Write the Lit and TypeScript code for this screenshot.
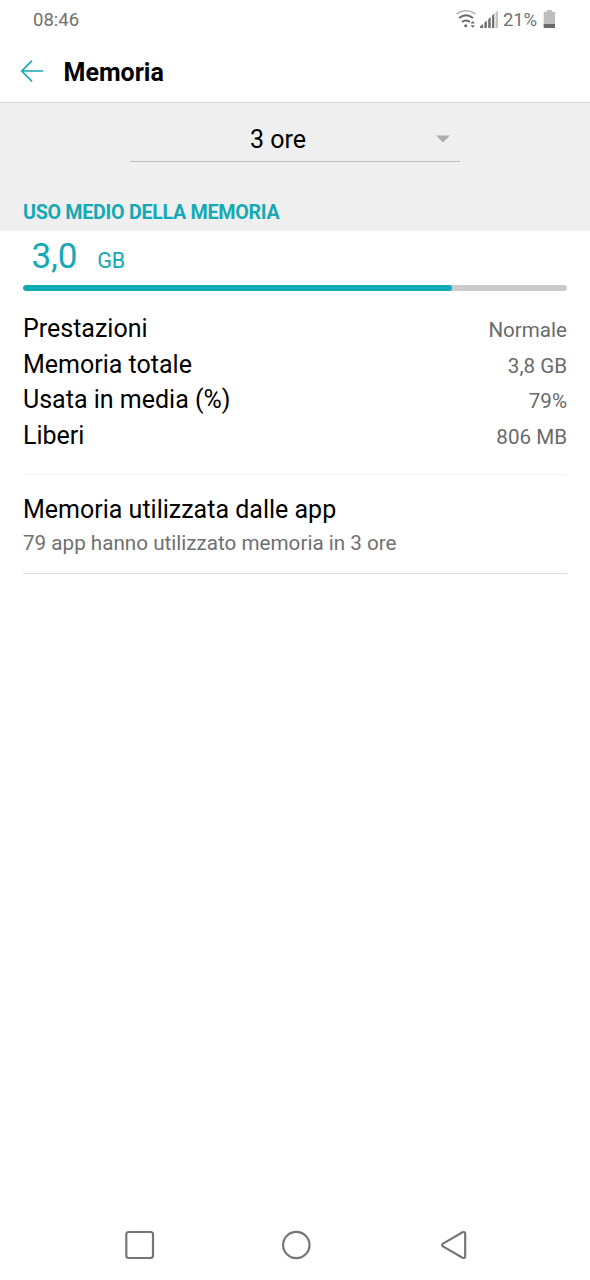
import { LitElement, html, css } from "lit";
import { customElement, property } from "lit/decorators.js";

interface Stat {
  label: string;
  value: string;
}

const STATS: Stat[] = [
  { label: "Prestazioni", value: "Normale" },
  { label: "Memoria totale", value: "3,8 GB" },
  { label: "Usata in media (%)", value: "79%" },
  { label: "Liberi", value: "806 MB" },
];

@customElement("status-bar")
class StatusBar extends LitElement {
  static styles = css`
    :host {
      display: flex;
      justify-content: space-between;
      height: 40px;
      padding: 0 34px 0 33px;
      box-sizing: border-box;
      color: #707070;
      font-size: 18.5px;
      line-height: 40px;
    }
    .right {
      display: flex;
    }
    .battery-level {
      width: 40px;
      padding-left: 4px;
      font-size: 18.5px;
      letter-spacing: -0.1px;
    }
    svg {
      display: block;
    }
  `;

  render() {
    return html`
      <span>08:46</span>
      <div class="right">
        <svg width="44" height="40" viewBox="455 0 44 40" fill="none">
          <path d="M456.5 14Q466 7.500 475.500 14" stroke="#b8b8b8" stroke-width="1.700" />
          <path d="M459 18Q466 12.500 473 18M462 22Q466 18.800 470 22" stroke="#6a6a6a" stroke-width="1.900" />
          <circle cx="465.700" cy="25.800" r="1.500" fill="#6a6a6a" />
          <path d="M470.500 23.500L472.700 21L474.900 23.500ZM470.500 25.300H474.900L472.700 27.800Z" fill="#6a6a6a" />
          <path d="M480 28V26.500L483 24V28ZM484.300 28V22.800L486.800 20.600V28ZM488.200 28V19.300L490.700 17V28ZM492 28V15.800L494.300 13.600V28Z" fill="#6e6e6e" />
          <path d="M495.500 28V12.500L498 10.500V28Z" fill="#c4c4c4" />
        </svg>
        <span class="battery-level">21%</span>
        <svg width="13" height="40" viewBox="543 0 13 40">
          <path d="M547 10H552V11.700H555V28H543.700V11.700H547Z" fill="#bdbdbd" />
          <path d="M543.700 24H555V28H543.700Z" fill="#6a6a6a" />
        </svg>
      </div>
    `;
  }
}

@customElement("title-bar")
class TitleBar extends LitElement {
  @property() heading = "";

  static styles = css`
    :host {
      display: flex;
      align-items: center;
      gap: 19.5px;
      height: 63px;
      padding-left: 20px;
      box-sizing: border-box;
      border-bottom: 1px solid #d4d4d4;
    }
    .title {
      font-size: 25px;
      font-weight: 700;
      line-height: 58px;
      color: #000;
      padding-top: 4px;
    }
  `;

  render() {
    return html`
      <svg width="24" height="24" viewBox="0 0 24 24" fill="none" stroke="#14a9b5" stroke-width="1.700">
        <path d="M23 12H2M12 1.700L1.800 12L12 22.300" />
      </svg>
      <span class="title">${this.heading}</span>
    `;
  }
}

@customElement("usage-meter")
class UsageMeter extends LitElement {
  @property({ type: Number }) percent = 0;

  static styles = css`
    :host {
      display: block;
      height: 6px;
      border-radius: 3px;
      background: #cacaca;
      overflow: hidden;
    }
    .fill {
      height: 6px;
      border-radius: 3px;
      background: #0faab3;
    }
  `;

  render() {
    return html`<div class="fill" style="width:${this.percent}%"></div>`;
  }
}

@customElement("nav-bar")
class NavBar extends LitElement {
  static styles = css`
    :host {
      display: block;
      height: 70px;
    }
    svg {
      display: block;
    }
  `;

  render() {
    return html`
      <svg width="590" height="70" viewBox="0 0 590 70" fill="none" stroke="#757575" stroke-width="2.200" stroke-linejoin="round">
        <rect x="126.300" y="22" width="26.700" height="26" rx="2.500" />
        <circle cx="296.300" cy="35" r="13.200" />
        <path d="M443 33.600L462.500 22.300Q465.200 21.200 465.200 24V46Q465.200 48.800 462.500 47.700L443 36.400Q441.100 35 443 33.600Z" />
      </svg>
    `;
  }
}

@customElement("app-root")
class AppRoot extends LitElement {
  static styles = css`
    :host {
      display: flex;
      flex-direction: column;
      width: 590px;
      height: 1280px;
      background: #fff;
      color: #000;
      font-family: Roboto, "Liberation Sans", sans-serif;
      overflow: hidden;
    }
    .filter {
      height: 128px;
      box-sizing: border-box;
      padding-top: 14px;
      background: #efefef;
    }
    .picker {
      display: grid;
      grid-template-columns: 34px 1fr 34px;
      align-items: center;
      width: 330px;
      height: 45px;
      box-sizing: border-box;
      margin: 0 auto;
      border-bottom: 1px solid #bdbdbd;
      font-size: 25px;
      line-height: 42px;
      text-align: center;
    }
    .choice {
      grid-column: 2;
      padding: 2px 34px 0 0;
    }
    .section {
      padding: 34px 23px 0;
      color: #14a9b5;
      font-size: 19.7px;
      font-weight: 700;
      letter-spacing: -0.3px;
      line-height: 34px;
    }
    .body {
      flex: 1;
      padding: 0 23px;
    }
    .amount {
      display: flex;
      align-items: baseline;
      gap: 20px;
      height: 54px;
      padding-left: 8.500px;
      color: #14a9b5;
      line-height: 51px;
    }
    .number {
      font-size: 35px;
      letter-spacing: -0.2px;
    }
    .unit {
      font-size: 21.5px;
    }
    .stats {
      padding: 20px 0 21px;
      border-bottom: 1px solid #f5f5f5;
    }
    .row {
      display: flex;
      align-items: baseline;
      justify-content: space-between;
      height: 35.500px;
      font-size: 25px;
      line-height: 36px;
    }
    .value {
      color: #6a6a6a;
      font-size: 20.600px;
    }
    .apps {
      height: 99px;
      box-sizing: border-box;
      padding-top: 17px;
      border-bottom: 1px solid #dcdcdc;
    }
    .apps-title {
      font-size: 25px;
      line-height: 36px;
    }
    .apps-note {
      color: #707070;
      font-size: 20.650px;
      line-height: 30px;
    }
  `;

  render() {
    return html`
      <status-bar></status-bar>
      <title-bar heading="Memoria"></title-bar>
      <div class="filter">
        <div class="picker">
          <span class="choice">3 ore</span>
          <svg width="34" height="10" viewBox="0 0 34 10">
            <path d="M10 1.500H24L17 8.500Z" fill="#adadad" />
          </svg>
        </div>
        <div class="section">USO MEDIO DELLA MEMORIA</div>
      </div>
      <div class="body">
        <div class="amount">
          <span class="number">3,0</span>
          <span class="unit">GB</span>
        </div>
        <usage-meter percent="78.8"></usage-meter>
        <div class="stats">
          ${STATS.map(
            (s) => html`<div class="row"><span>${s.label}</span><span class="value">${s.value}</span></div>`
          )}
        </div>
        <div class="apps">
          <div class="apps-title">Memoria utilizzata dalle app</div>
          <div class="apps-note">79 app hanno utilizzato memoria in 3 ore</div>
        </div>
      </div>
      <nav-bar></nav-bar>
    `;
  }
}
